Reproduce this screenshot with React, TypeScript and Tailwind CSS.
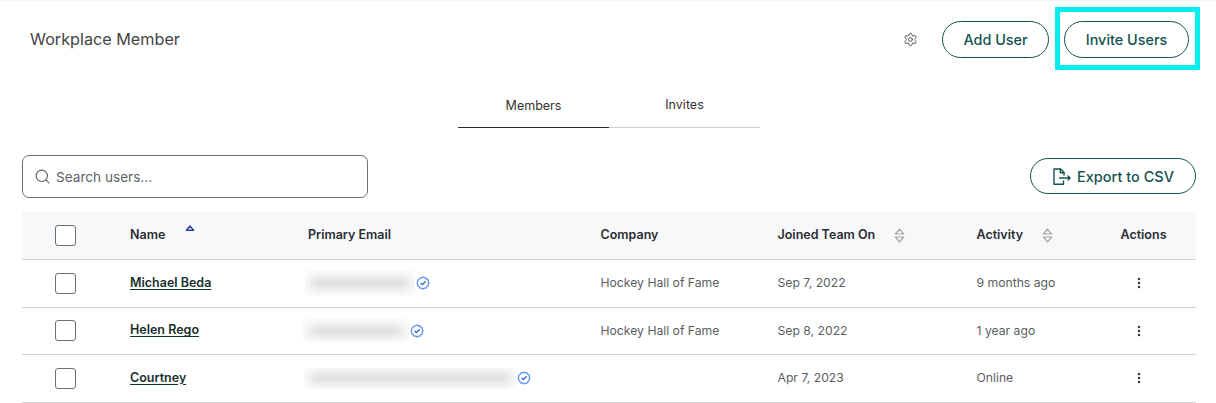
import { EllipsisVertical, Search, Settings } from "lucide-react";

type Member = {
  name: string;
  company: string;
  joined: string;
  activity: string;
  blur: string;
  bar: string;
  offset: string;
};

const MEMBERS: Member[] = [
  { name: "Michael Beda", company: "Hockey Hall of Fame", joined: "Sep 7, 2022", activity: "9 months ago", blur: "w-[110px] h-[26px]", bar: "w-[100px]", offset: "-ml-[3px]" },
  { name: "Helen Rego", company: "Hockey Hall of Fame", joined: "Sep 8, 2022", activity: "1 year ago", blur: "w-[106px] h-[23px]", bar: "w-[94px]", offset: "-ml-[5px]" },
  { name: "Courtney", company: "", joined: "Apr 7, 2023", activity: "Online", blur: "w-[212px] h-[21px]", bar: "w-[202px]", offset: "-ml-[4px]" },
];

const GRID = "grid grid-cols-[108px_178px_292.5px_177px_199px_144px_1fr] items-center";

function SortIcon() {
  return (
    <svg width="11" height="15" viewBox="0 0 11 15" fill="none" stroke="#a3a3a3" strokeWidth="1.2" strokeLinejoin="round">
      <path d="M5.5 1.2 9.6 6H1.4Z" />
      <path d="M5.5 13.8 9.6 9H1.4Z" />
    </svg>
  );
}

function Checkbox() {
  return <div className="ml-[33px] w-[21px] h-[21px] rounded-[3px] border border-[#6b6f76] bg-white" />;
}

function ExportIcon() {
  return (
    <svg width="20" height="18" viewBox="0 0 20 18" fill="none" stroke="#14534f" strokeWidth="1.4" strokeLinejoin="round" strokeLinecap="round">
      <path d="M11.5 13v3.2H2V1h6.5L12 4.5V7" />
      <path d="M8.3 1.2v3.6H12" />
      <path d="M7.5 10h9.5" />
      <path d="m16 8 2.2 2-2.2 2" fill="#14534f" />
    </svg>
  );
}

function VerifiedBadge() {
  return (
    <svg className="ml-[1px] shrink-0" width="14" height="14" viewBox="0 0 14 14" fill="none" stroke="#5c8ff2" strokeLinecap="round" strokeLinejoin="round">
      <path
        strokeWidth="1.2"
        d="M7 1 8.3 1.9 9.9 1.7 10.7 3.1 12.2 3.8 12.1 5.4 13 6.9 12.1 8.3 12.2 9.9 10.8 10.7 10 12.1 8.4 12.1 7 13 5.6 12.1 4 12.2 3.2 10.8 1.8 10 1.9 8.4 1 7 1.9 5.6 1.8 4 3.2 3.2 4 1.8 5.6 1.9Z"
      />
      <path strokeWidth="1.3" stroke="#2f62c9" d="m4.9 7.1 1.5 1.5 2.8-2.9" />
    </svg>
  );
}

export default function App() {
  return (
    <div className="w-[1216px] h-[403px] overflow-hidden bg-white font-['Inter',sans-serif] border-t border-[#f5f5f5]">
      <div className="flex items-start h-[77px] pl-[30px] pr-[16px] pt-[6px]">
        <h1 className="mt-[20px] text-[16.2px] leading-[24px] text-[#444444]">Workplace Member</h1>
        <div className="ml-auto flex items-start">
          <Settings className="mt-[25px] mr-[24px] text-[#555555]" size={15} strokeWidth={1.6} />
          <button className="mt-[14px] h-[37px] w-[107px] rounded-full border border-[#14534f] text-[14.4px] font-medium text-[#14534f]">
            Add User
          </button>
          <div className="ml-[6px] h-[63px] border-[5px] border-[#05eeee] pl-[4px] pr-[6px] pt-[9px]">
            <button className="h-[37px] w-[125px] rounded-full border border-[#14534f] text-[14.4px] font-medium text-[#14534f]">
              Invite Users
            </button>
          </div>
        </div>
      </div>

      <div className="ml-[458px] flex w-[302px] h-[50px] text-[12.5px] text-[#333333]">
        <div className="w-[151px] border-b border-[#2b2b2b] pt-[20px] text-center leading-[16px]">Members</div>
        <div className="w-[151px] border-b border-[#cfcfcf] pt-[19px] text-center leading-[16px]">Invites</div>
      </div>

      <div className="mt-[27px] mx-[20px] ml-[22px] flex items-start justify-between h-[43px]">
        <div className="flex items-center w-[346px] h-[43px] rounded-[7px] border border-[#6b6f76] pl-[11px]">
          <Search size={17} strokeWidth={1.6} className="text-[#5f6368]" />
          <span className="ml-[5px] pt-[2px] text-[13.6px] text-[#5f6368]">Search users...</span>
        </div>
        <button className="flex items-center justify-center gap-[5px] w-[166px] h-[36px] mt-[3px] pt-[1px] rounded-full border border-[#14534f] text-[14.5px] font-medium text-[#14534f]">
          <ExportIcon />
          Export to CSV
        </button>
      </div>

      <div className="mt-[14px] ml-[22px] w-[1174px] text-[12.2px]">
        <div className={`${GRID} h-[48px] bg-[#f7f8fa] border-b border-[#d4d4d4] font-semibold text-[12.5px] text-[#2a2d34]`}>
          <Checkbox />
          <div className="relative">
            Name
            <svg className="absolute left-[55px] top-[-1px]" width="10" height="7" viewBox="0 0 10 7" fill="none" stroke="#2f3fa8" strokeWidth="1.4" strokeLinejoin="round">
              <path d="M5 1 8.6 5.2H1.4Z" />
            </svg>
          </div>
          <div>Primary Email</div>
          <div>Company</div>
          <div className="flex items-center gap-[19px]">
            Joined Team On
            <SortIcon />
          </div>
          <div className="flex items-center gap-[19px]">
            Activity
            <SortIcon />
          </div>
          <div>Actions</div>
        </div>

        {MEMBERS.map((member) => (
          <div key={member.name} className={`${GRID} h-[47.5px] border-b border-[#d4d4d4] text-[#5a5d63]`}>
            <Checkbox />
            <div className="font-semibold text-[12.5px] text-[#17302c] underline underline-offset-2">{member.name}</div>
            <div className={`flex items-center ${member.offset}`}>
              <div className={`${member.blur} flex items-center justify-center overflow-hidden bg-[#fbfbfb]`}>
                <div className={`${member.bar} h-[10px] rounded-full bg-[#d9d9d9] blur-[5px]`} />
              </div>
              <VerifiedBadge />
            </div>
            <div>{member.company}</div>
            <div>{member.joined}</div>
            <div>{member.activity}</div>
            <div className="pl-[11px]">
              <EllipsisVertical size={14} strokeWidth={2.4} className="text-[#3a3a3a]" />
            </div>
          </div>
        ))}
      </div>
    </div>
  );
}
